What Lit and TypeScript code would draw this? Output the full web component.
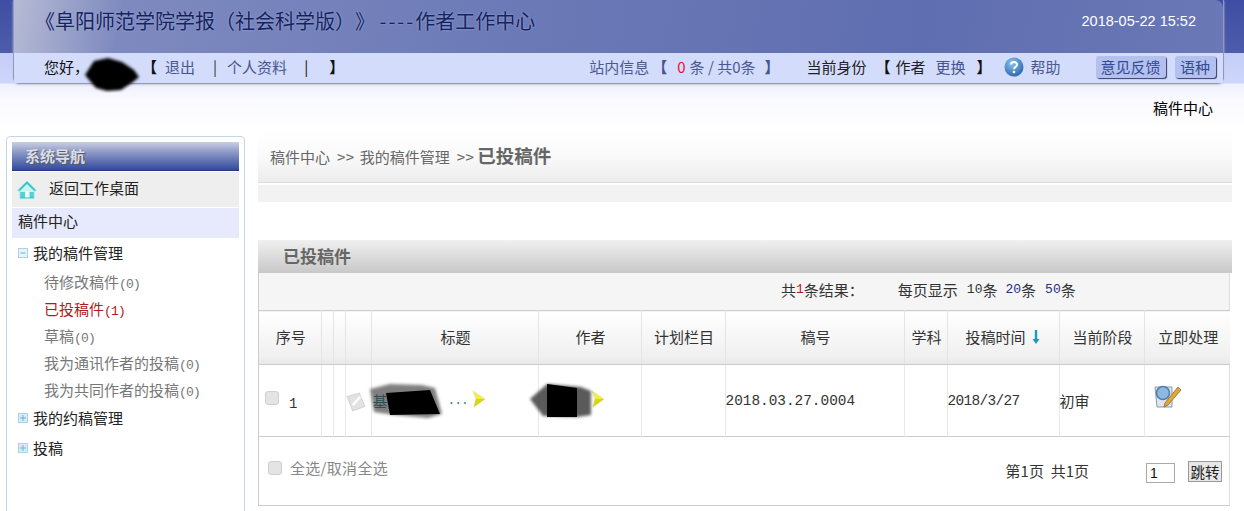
import { LitElement, html, css, svg } from "lit";
import { customElement } from "lit/decorators.js";

const minus = html`<svg class="tw" viewBox="0 0 10 10"><rect x=".5" y=".5" width="9" height="9" fill="#e8f3fa" stroke="#a9d3e8"/><path d="M2.5 5h5" stroke="#6fb2d4"/></svg>`;
const plus = html`<svg class="tw" viewBox="0 0 10 10"><rect x=".5" y=".5" width="9" height="9" fill="#d8ecf7" stroke="#a9d3e8"/><path d="M2 5h6M5 2v6" stroke="#6fb2d4"/></svg>`;
const arrow = html`<svg class="tri" viewBox="0 0 14 18"><path d="M1 1 L13 9 L2 17 L4 9Z" fill="#f2f030" stroke="#e6e6b8" stroke-width="1"/><path d="M4 9 L13 9 L2 17Z" fill="#d6d51c"/></svg>`;
const blur = svg`<defs><filter id="b" x="-10%" y="-10%" width="120%" height="120%"><feGaussianBlur stdDeviation="1.4"/></filter></defs>`;

@customElement("app-root")
export class AppRoot extends LitElement {
  static styles = css`
    :host { display: block; position: relative; width: 1244px; height: 511px; overflow: hidden; background: #fff;
      font: 15px/20px "Noto Sans CJK SC", "Liberation Sans", sans-serif; color: #555; text-spacing-trim: space-all; }
    .top { height: 130px; background: linear-gradient(to bottom, #3f4ea4 0, #4d5ca9 53px, #c3cdf7 53px, #ced6fa 83px, #eef0fd 84px, #fafaff 100px, #fff 130px); }
    .glass { box-sizing: border-box; margin: 0 20px 0 13px; height: 84px; border: 1px solid #8f98c4; border-top: 0; border-radius: 0 0 6px 6px;
      box-shadow: 0 1px 2px #c8cbd8; }
    .title-row { height: 53px; display: flex; justify-content: space-between; align-items: center; box-sizing: border-box; padding: 0 27px 12px 21px;
      background: linear-gradient(100deg, #b6bbd4 0, #7e8abf 9%, #6c7ab7 40%, #5f6eb0 75%, #6a78b6 100%); border-radius: 0 8px 0 0; }
    .title { font-size: 20px; color: #14235f; text-shadow: 0 0 2px #aab4dd; white-space: pre; }
    .title i { font-style: normal; letter-spacing: 2px; }
    .date { font: 14.5px "Liberation Sans", sans-serif; color: #fff; }
    .bar { height: 30px; display: flex; align-items: center; background: #d4dcfb; padding-left: 30px; padding-bottom: 3px; box-sizing: border-box; color: #333; white-space: pre; }
    .bk { color: #111; font-weight: 700; }
    .nv { color: #46558f; }
    .info { color: #4a5a90; }
    .red { color: #e01030; }
    .help { width: 20px; height: 20px; margin-right: 7px; }
    .btn { box-sizing: border-box; height: 22px; display: flex; align-items: center; justify-content: center; background: #b4c0ee; color: #334a95; border-radius: 3px;
      box-shadow: 1px 1px 1px #343a68; }
    .crumbline { height: 46px; display: flex; justify-content: flex-end; padding: 14px 31px 0 0; box-sizing: border-box; color: #000; }
    .body { display: flex; align-items: flex-start; padding: 6px 12px 0 6px; gap: 13px; }
    .side { box-sizing: border-box; width: 239px; height: 400px; flex: none; border: 1px solid #c4d8e0; border-radius: 4px 4px 0 0; padding: 5px; background: #fff; }
    .side-h { height: 29px; background: linear-gradient(to bottom, #c9cfe2 0, #8794c4 40%, #33499c 100%); color: #d9deea; font-weight: 700; padding-left: 13px; line-height: 27px; border-bottom: 1px solid #26387f; box-sizing: border-box; text-shadow: 1px 1px 1px #555; }
    .home { height: 35px; margin-top: 1px; background: #eee; display: flex; align-items: center; color: #222; padding: 0 0 3px 5px; box-sizing: border-box; gap: 12px; }
    .home svg { width: 20px; height: 20px; margin-top: 3px; }
    .center { height: 30px; margin-top: 1px; background: #e6eafc; color: #222; display: flex; align-items: center; padding: 0 0 5px 6px; box-sizing: border-box; }
    .tree { display: flex; align-items: center; color: #222; height: 30px; padding-left: 6px; gap: 5px; }
    .tw { width: 10px; height: 10px; }
    .sub { height: 27px; line-height: 27px; padding-left: 32px; color: #777; }
    .sub.on { color: #b01a22; }
    .sub span { font-family: "Liberation Mono", monospace; font-size: 13px; letter-spacing: -.8px; }
    .mono { font-family: "Liberation Mono", monospace; font-size: 13px; }
    .main { width: 974px; flex: none; margin-top: -6px; }
    .crumb { box-sizing: border-box; height: 53px; padding: 15px 0 0 12px; background: linear-gradient(to bottom, #fff 0, #fafafa 50%, #ededed 100%); border-bottom: 1px solid #ddd; color: #666; white-space: pre; display: flex; align-items: baseline; }
    .crumb i { font-style: normal; margin: 0 5px 0 7px; letter-spacing: .5px; }
    .crumb b { font-size: 18.5px; color: #666; margin-left: -2px; }
    .strip { height: 17px; margin-top: 2px; background: #f2f2f2; }
    .sec { height: 33px; margin-top: 38px; background: linear-gradient(to bottom, #f0f0f0, #c8c8c8); color: #666; font-size: 17px; font-weight: 700; line-height: 31px; padding-left: 25px; box-sizing: border-box; }
    .panel { width: 972px; box-sizing: border-box; border-left: 1px solid #ccc; border-right: 1px solid #ddd; border-bottom: 1px solid #ccc; height: 233px; }
    .res { height: 37px; background: #f5f5f5; display: flex; align-items: center; padding: 0 0 3px 522px; box-sizing: border-box; color: #333; white-space: pre; }
    .res i { font-style: normal; color: #b01a22; font-family: "Liberation Mono", monospace; font-size: 13px; }
    .res a { color: #26307e; font-family: "Liberation Mono", monospace; font-size: 13px; }
    table { border-collapse: collapse; table-layout: fixed; width: 971px; border-top: 1px solid #ccc; border-bottom: 1px solid #ccc; }
    th { height: 51px; padding: 0 0 2px 2px; font-weight: 400; color: #333; background: linear-gradient(to bottom, #fff, #f0f0f0 85%, #e8e8e8); border-right: 1px solid #e4e4e4; border-bottom: 1px solid #ccc; }
    td { height: 71px; padding: 0; border-right: 1px solid #e8e8e8; color: #333; vertical-align: middle; }
    th:last-child, td:last-child { border-right: 0; }
    .sn { display: flex; align-items: center; padding-left: 6px; gap: 10px; }
    .cb { display: block; width: 14px; height: 14px; background: #e4e4e4; border: 1px solid #cfcfcf; border-radius: 3px; box-sizing: border-box; flex: none; }
    .sn .cb { margin-top: -6px; }
    .sn .mono { margin-top: 6px; font-size: 14px; }
    .ti { display: flex; align-items: center; color: #27808c; white-space: pre; padding-left: 1px; }
    .ti .mono { letter-spacing: -1px; }
    .au { display: flex; align-items: center; justify-content: flex-end; color: #7a1a20; padding-right: 36px; }
    .tri { width: 14px; height: 18px; flex: none; margin-left: 4px; margin-top: -4px; }
    .au .tri { margin-left: 0; }
    .dt { font-family: "Liberation Mono", monospace; font-size: 14.4px; }
    .dt2 { letter-spacing: -.65px; }
    .dn { display: block; width: 14px; height: 16px; }
    .tm { display: inline-flex; align-items: center; gap: 3px; }
    .foot { display: flex; align-items: center; height: 69px; padding: 0 7px 2px 9px; color: #888; white-space: pre; box-sizing: border-box; }
    .foot .cb { margin-right: 8px; margin-top: -6px; }
    .foot .all { margin-top: -6px; letter-spacing: .3px; }
    .pg { margin-left: auto; color: #333; display: flex; align-items: center; }
    .inp { box-sizing: border-box; width: 29px; height: 20px; border: 1px solid #aaa; margin: 4px 0 0 57px; font: 14px/18px "Liberation Sans", sans-serif; padding-left: 3px; color: #111; background: #fff; }
    .go { box-sizing: border-box; width: 34px; height: 21px; margin: 2px 0 0 13px; background: #e8e8e8; border: 1px solid #999; color: #222; text-align: center; line-height: 19px; font-size: 14.5px; }
    .scr { position: absolute; pointer-events: none; }
  `;

  render() {
    return html`
      <div class="top">
        <div class="glass">
          <div class="title-row">
            <span class="title">《阜阳师范学院学报（社会科学版）》 <i>----</i>作者工作中心</span>
            <span class="date">2018-05-22 15:52</span>
          </div>
          <div class="bar">
            <span style="color:#111">您好，</span><span style="width:53px"></span><span class="bk">【</span><span class="nv" style="margin-left:8px">退出</span>
            <span style="margin-left:18px;color:#333">|</span><span class="nv" style="margin-left:10px">个人资料</span>
            <span style="margin-left:17px;color:#111">|</span><span class="bk" style="margin-left:21px">】</span>
            <span class="info" style="margin-left:245px">站内信息</span><span class="bk" style="margin-left:3px;color:#46558f">【</span><span class="red" style="margin-left:10px">0</span><span class="info" style="margin-left:4px">条 / 共0条</span><span class="bk" style="margin-left:9px;color:#46558f">】</span>
            <span style="margin-left:27px;color:#222">当前身份</span><span class="bk" style="margin-left:9px">【</span><span style="margin-left:5px;color:#222">作者</span><span class="nv" style="margin-left:10px">更换</span><span class="bk" style="margin-left:11px">】</span>
            <svg class="help" style="margin-left:12px" viewBox="0 0 20 20"><defs><radialGradient id="h" cx=".4" cy=".3" r=".8"><stop offset="0" stop-color="#8ec4ee"/><stop offset="1" stop-color="#1f5da8"/></radialGradient></defs><circle cx="10" cy="10" r="9.5" fill="url(#h)"/><path d="M7 7.500c.3-3.500 6.200-3.300 6 .3-.1 2.200-3 2.200-3 4.500" fill="none" stroke="#fff" stroke-width="2"/><circle cx="10" cy="15" r="1.300" fill="#fff"/></svg>
            <span class="info">帮助</span>
            <span class="btn" style="width:70px;margin-left:35px">意见反馈</span>
            <span class="btn" style="width:41px;margin-left:9px">语种</span>
          </div>
        </div>
        <div class="crumbline">稿件中心</div>
      </div>
      <div class="body">
        <div class="side">
          <div class="side-h">系统导航</div>
          <div class="home">
            <svg viewBox="0 0 20 20"><path d="M10 1 19.500 10.500 17 11v7.500H3V11L.5 10.500z" fill="#37c3c8" stroke="#8fe2e2" stroke-width=".8"/><path d="M3.200 10.500 10 4l6.800 6.500V17H3.200z" fill="#c8f4f0"/><path d="M3.200 12h13.600v5.200H3.200z" fill="#56d0d4"/><rect x="8" y="11" width="4.500" height="6.500" fill="#f0fcfc"/></svg>
            <span>返回工作桌面</span>
          </div>
          <div class="center">稿件中心</div>
          <div class="tree">${minus}<span>我的稿件管理</span></div>
          <div>
            <div class="sub">待修改稿件<span>(0)</span></div>
            <div class="sub on">已投稿件<span>(1)</span></div>
            <div class="sub">草稿<span>(0)</span></div>
            <div class="sub">我为通讯作者的投稿<span>(0)</span></div>
            <div class="sub">我为共同作者的投稿<span>(0)</span></div>
          </div>
          <div class="tree">${plus}<span>我的约稿管理</span></div>
          <div class="tree">${plus}<span>投稿</span></div>
        </div>
        <div class="main">
          <div class="crumb"><span>稿件中心</span><i>&gt;&gt;</i><span>我的稿件管理</span><i>&gt;&gt;</i><b>已投稿件</b></div>
          <div class="strip"></div>
          <div class="sec">已投稿件</div>
          <div class="panel">
            <div class="res"><span>共</span><i>1</i><span>条结果：</span><span style="margin-left:34px">每页显示</span><span class="mono" style="margin-left:9px">10</span><span>条</span><a style="margin-left:8px">20</a><span>条</span><a style="margin-left:9px">50</a><span>条</span></div>
            <table>
              <colgroup><col style="width:62px"/><col style="width:12px"/><col style="width:12px"/><col style="width:26px"/><col style="width:167px"/><col style="width:103px"/><col style="width:84px"/><col style="width:179px"/><col style="width:43px"/><col style="width:112px"/><col style="width:85px"/><col style="width:86px"/></colgroup>
              <thead><tr>
                <th>序号</th><th></th><th></th><th></th><th>标题</th><th>作者</th><th>计划栏目</th><th>稿号</th><th>学科</th>
                <th><span class="tm">投稿时间<svg class="dn" viewBox="0 0 14 16"><path d="M7 1v10" stroke="#1c9ab8" stroke-width="2.400"/><path d="M3.500 10H10.500L7 15z" fill="#1c9ab8"/></svg></span></th>
                <th>当前阶段</th><th>立即处理</th>
              </tr></thead>
              <tbody><tr>
                <td><div class="sn"><span class="cb"></span><span class="mono">1</span></div></td>
                <td></td><td></td>
                <td><svg width="20" height="22" viewBox="0 0 18 20" style="display:block;margin-top:3px"><path d="M1 5 12 2l5 12-11 4z" fill="#e2e2e2" stroke="#d5d5d5"/><path d="M6 13l7-8" stroke="#fff" stroke-width="2"/></svg></td>
                <td><div class="ti"><span>基</span><span style="width:60px"></span><span class="mono">...</span>${arrow}</div></td>
                <td><div class="au">${arrow}</div></td>
                <td></td>
                <td class="dt">2018.03.27.0004</td>
                <td></td>
                <td class="dt dt2">2018/3/27</td>
                <td>初审</td>
                <td>
                  <svg width="30" height="26" viewBox="0 0 30 26" style="display:block;margin:-8px 0 0 7px"><path d="M3 3h17v20H5z" fill="#dfe6ee" stroke="#8a9ab0"/><circle cx="11" cy="9" r="6.500" fill="#8fb8de" stroke="#4f7fae" stroke-width="1.500"/><path d="M26 3 13 19l-1 4 4-2L29 6z" fill="#e0a83a" stroke="#8a6a20" stroke-width=".8"/></svg>
                </td>
              </tr></tbody>
            </table>
            <div class="foot">
              <span class="cb"></span><span class="all">全选/取消全选</span>
              <div class="pg"><span>第</span><span>1</span><span>页  共</span><span>1</span><span>页</span><span class="inp">1</span><span class="go">跳转</span></div>
            </div>
          </div>
        </div>
      </div>
      <svg class="scr" style="left:80px;top:55px" width="62" height="38" viewBox="0 0 62 38">${blur}<path d="M5 20 14 6 28 3l14 4 12 8 5 7-6 5-12 8-14 1-11-3z" fill="#000" filter="url(#b)"/></svg>
      <svg class="scr" style="left:366px;top:381px" width="84" height="40" viewBox="0 0 84 40">${blur}<path d="M4 8 24 3l32 1 13 3 7 26-14 4-34-3-20-3z" fill="#333" opacity=".62" filter="url(#b)"/><path d="M20 12 64 9l10 24-50 1z" fill="#000"/></svg>
      <svg class="scr" style="left:527px;top:380px" width="68" height="40" viewBox="0 0 68 40">${blur}<path d="M3 19 20 4l12 1 22 2 10 4v24l-14 2-34-1z" fill="#333" opacity=".8" filter="url(#b)"/><path d="M20 4l30 4v29H20z" fill="#000"/></svg>
    `;
  }
}
